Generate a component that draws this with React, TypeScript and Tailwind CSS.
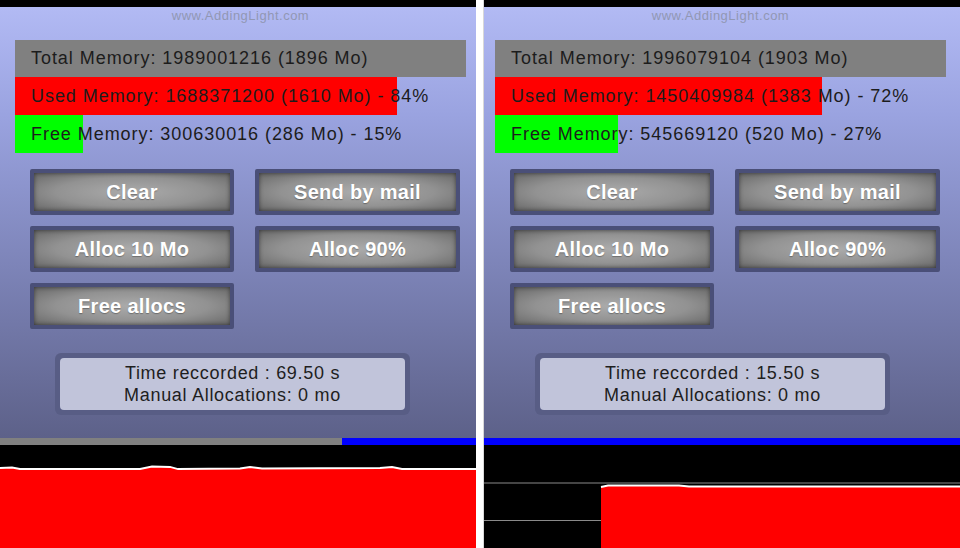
import React from 'react';

type PanelData = {
  total: string;
  used: string;
  usedPct: number;
  free: string;
  freePct: number;
  time: string;
  progress: number;
  side: 'left' | 'right';
};

const panels: PanelData[] = [
  {
    total: 'Total Memory: 1989001216 (1896 Mo)',
    used: 'Used Memory: 1688371200 (1610 Mo) - 84%',
    usedPct: 84.7,
    free: 'Free Memory: 300630016 (286 Mo) - 15%',
    freePct: 15.1,
    time: 'Time reccorded : 69.50 s',
    progress: 71.8,
    side: 'left',
  },
  {
    total: 'Total Memory: 1996079104 (1903 Mo)',
    used: 'Used Memory: 1450409984 (1383 Mo) - 72%',
    usedPct: 72.5,
    free: 'Free Memory: 545669120 (520 Mo) - 27%',
    freePct: 27.3,
    time: 'Time reccorded : 15.50 s',
    progress: 0,
    side: 'right',
  },
];

function MemBar({ text, color, pct, h }: { text: string; color: string; pct: number; h: string }) {
  return (
    <div className={`relative w-[451px] ${h} flex items-center`}>
      <div className={`absolute left-0 top-0 bottom-0 ${color}`} style={{ width: `${pct}%` }} />
      <span className="relative pl-4 text-[18px] text-[#1c1c1c] tracking-[0.95px] whitespace-nowrap">{text}</span>
    </div>
  );
}

function Btn({ label }: { label: string }) {
  return (
    <div className="h-[46px] border-4 border-[#4a4f78] rounded-[2px] bg-[radial-gradient(ellipse_at_center,#ababab_0%,#929292_55%,#666666_100%)] shadow-[inset_0_0_4px_rgba(0,0,0,0.5)] flex items-center justify-center">
      <span className="text-white font-bold text-[20px] tracking-[0.3px] [text-shadow:0_1px_1px_rgba(0,0,0,0.3)]">{label}</span>
    </div>
  );
}

function LeftChart() {
  return (
    <svg width="476" height="103" viewBox="0 0 476 103" className="block">
      <rect width="476" height="103" fill="#000" />
      <path
        d="M0 23 L12 22.5 L20 24 L140 24 L152 21.5 L170 22 L178 24 L240 23.5 L250 22 L262 23.5 L380 23 L392 22 L402 24 L476 24 L476 103 L0 103 Z"
        fill="#ff0000"
      />
      <path
        d="M0 23 L12 22.5 L20 24 L140 24 L152 21.5 L170 22 L178 24 L240 23.5 L250 22 L262 23.5 L380 23 L392 22 L402 24 L476 24"
        fill="none"
        stroke="#fff"
        strokeWidth="1.8"
      />
    </svg>
  );
}

function RightChart() {
  return (
    <svg width="477" height="103" viewBox="0 0 477 103" className="block">
      <rect width="477" height="103" fill="#000" />
      <line x1="0" y1="38" x2="477" y2="38" stroke="#8a8a8a" strokeWidth="1" />
      <line x1="0" y1="75.5" x2="477" y2="75.5" stroke="#8a8a8a" strokeWidth="1" />
      <path d="M117 42 L124 40.5 L195 40.5 L205 41.5 L477 41.5 L477 103 L117 103 Z" fill="#ff0000" />
      <path d="M117 42 L124 40.5 L195 40.5 L205 41.5 L477 41.5" fill="none" stroke="#fff" strokeWidth="1.8" />
    </svg>
  );
}

function Panel({ d }: { d: PanelData }) {
  const left = d.side === 'left';
  return (
    <div className={`flex flex-col h-[548px] overflow-hidden ${left ? 'w-[476px]' : 'w-[477px] border-l border-[#d8d8d8]'}`}>
      <div className="h-[7px] bg-black shrink-0" />
      <div className={`h-[431px] shrink-0 flex flex-col bg-[linear-gradient(to_bottom,#b2baf4_0%,#9aa3e0_25%,#7d84b8_60%,#5d6189_100%)] ${left ? 'pl-[15px]' : 'pl-[11px]'}`}>
        <div className="w-[451px] h-[17px] leading-[17px] text-center text-[13px] tracking-[0.5px] text-[#9197b4]">www.AddingLight.com</div>
        <div className="mt-[16px] flex flex-col">
          <MemBar text={d.total} color="bg-[#808080]" pct={100} h="h-[37px]" />
          <MemBar text={d.used} color="bg-[#ff0000]" pct={d.usedPct} h="h-[38px]" />
          <MemBar text={d.free} color="bg-[#00ff00]" pct={d.freePct} h="h-[38px]" />
        </div>
        <div className="mt-[16px] ml-[15px] grid grid-cols-[204px_205px] gap-x-[21px] gap-y-[11px]">
          <Btn label="Clear" />
          <Btn label="Send by mail" />
          <Btn label="Alloc 10 Mo" />
          <Btn label="Alloc 90%" />
          <Btn label="Free allocs" />
        </div>
        <div className="mt-[24px] ml-[40px] w-[355px] h-[62px] rounded-md bg-[#585d85] p-[5px]">
          <div className="h-full rounded-sm bg-[#c1c4da] flex flex-col items-center justify-center text-[18px] leading-[22px] tracking-[0.7px] text-[#1e1e1e]">
            <span>{d.time}</span>
            <span>Manual Allocations: 0 mo</span>
          </div>
        </div>
      </div>
      <div className="h-[7px] shrink-0 bg-[#0000ff] flex">
        <div className="h-full bg-[#808080]" style={{ width: `${d.progress}%` }} />
      </div>
      <div className="flex-1 bg-black">{left ? <LeftChart /> : <RightChart />}</div>
    </div>
  );
}

export default function App() {
  return (
    <div className="w-[960px] h-[548px] bg-white flex font-['Liberation_Sans',Arial,sans-serif]">
      <Panel d={panels[0]} />
      <div className="w-[7px] bg-white shrink-0" />
      <Panel d={panels[1]} />
    </div>
  );
}
